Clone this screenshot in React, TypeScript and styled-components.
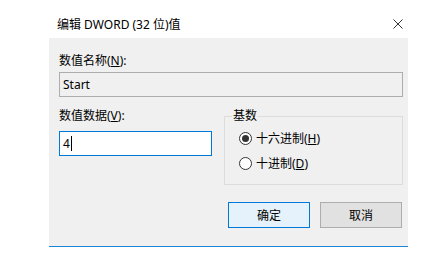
import React from 'react';
import styled, { createGlobalStyle } from 'styled-components';

const GlobalStyle = createGlobalStyle`
  html, body {
    margin: 0;
    padding: 0;
    background: #ffffff;
  }
  body {
    font-family: "Noto Sans", "Noto Sans CJK SC", sans-serif;
    font-size: 12px;
    color: #000000;
  }
`;

const Page = styled.div`
  width: 436px;
  height: 257px;
  padding-left: 49px;
  box-sizing: border-box;
`;

const Window = styled.div`
  width: 359px;
  display: flex;
  flex-direction: column;
`;

const TitleBar = styled.div`
  height: 38px;
  display: flex;
  align-items: center;
  justify-content: space-between;
  padding: 0 5px 0 8px;
  background: #ffffff;
`;

const Title = styled.span`
  font-size: 12px;
  line-height: 16px;
  padding-top: 11px;
`;

const CloseButton = styled.span`
  width: 10px;
  height: 10px;
  display: flex;
  margin-top: 10px;
`;

const Body = styled.div`
  background: #f0f0f0;
  border-bottom: 1px solid #1a86d8;
  padding: 15px 5px 18px 10px;
  display: flex;
  flex-direction: column;
`;

const Label = styled.div`
  line-height: 16px;
  height: 16px;
  font-size: 12px;
`;

const TextBox = styled.div<{ $focused?: boolean }>`
  height: 25px;
  box-sizing: border-box;
  border: 1px solid ${p => (p.$focused ? '#0078d7' : '#adadad')};
  background: ${p => (p.$focused ? '#ffffff' : '#f0f0f0')};
  margin-top: 3px;
  padding-left: 3px;
  display: flex;
  align-items: center;
  font-size: 12px;
`;

const Caret = styled.span`
  width: 1px;
  height: 15px;
  background: #000000;
  margin-left: 1px;
`;

const DataRow = styled.div`
  display: grid;
  grid-template-columns: 153px 179px;
  column-gap: 12px;
  margin-top: 11px;
`;

const DataColumn = styled.div`
  display: flex;
  flex-direction: column;
  & > ${TextBox} {
    margin-top: 7px;
  }
`;

const GroupBox = styled.fieldset`
  margin: 0;
  padding: 6px 0 0 14px;
  border: 1px solid #dcdcdc;
  height: 77px;
  box-sizing: border-box;
  display: flex;
  flex-direction: column;
  gap: 9px;
`;

const Legend = styled.legend`
  padding: 0 1px;
  margin-left: -7px;
  line-height: 16px;
  font-size: 12px;
`;

const RadioRow = styled.div`
  display: flex;
  align-items: center;
  gap: 4px;
  height: 16px;
`;

const RadioCircle = styled.span<{ $checked?: boolean }>`
  width: 13px;
  height: 13px;
  box-sizing: border-box;
  border-radius: 50%;
  border: 1px solid #333333;
  background: #ffffff;
  display: flex;
  align-items: center;
  justify-content: center;
  &::after {
    content: '';
    width: 7px;
    height: 7px;
    border-radius: 50%;
    background: #333333;
    display: ${p => (p.$checked ? 'block' : 'none')};
  }
`;

const Mnemonic = styled.span`
  text-decoration: underline;
`;

const ButtonRow = styled.div`
  display: flex;
  justify-content: flex-end;
  gap: 10px;
  margin-top: 17px;
  padding-right: 1px;
`;

const Button = styled.div<{ $primary?: boolean }>`
  width: 82px;
  height: 26px;
  box-sizing: border-box;
  display: flex;
  align-items: center;
  justify-content: center;
  font-size: 12px;
  border: 1px solid ${p => (p.$primary ? '#0078d7' : '#adadad')};
  background: ${p => (p.$primary ? '#e5f1fb' : '#e1e1e1')};
`;

export default function App() {
  return (
    <>
      <GlobalStyle />
      <Page>
        <Window>
          <TitleBar>
            <Title>编辑 DWORD (32 位)值</Title>
            <CloseButton>
              <svg width="10" height="10" viewBox="0 0 10 10">
                <path d="M0.5 0.5 L9.5 9.5 M9.5 0.5 L0.5 9.5" stroke="#333" strokeWidth="1" fill="none" />
              </svg>
            </CloseButton>
          </TitleBar>
          <Body>
            <Label>
              数值名称(<Mnemonic>N</Mnemonic>):
            </Label>
            <TextBox>Start</TextBox>
            <DataRow>
              <DataColumn>
                <Label>
                  数值数据(<Mnemonic>V</Mnemonic>):
                </Label>
                <TextBox $focused>
                  4<Caret />
                </TextBox>
              </DataColumn>
              <GroupBox>
                <Legend>基数</Legend>
                <RadioRow>
                  <RadioCircle $checked />
                  <span>
                    十六进制(<Mnemonic>H</Mnemonic>)
                  </span>
                </RadioRow>
                <RadioRow>
                  <RadioCircle />
                  <span>
                    十进制(<Mnemonic>D</Mnemonic>)
                  </span>
                </RadioRow>
              </GroupBox>
            </DataRow>
            <ButtonRow>
              <Button $primary>确定</Button>
              <Button>取消</Button>
            </ButtonRow>
          </Body>
        </Window>
      </Page>
    </>
  );
}
